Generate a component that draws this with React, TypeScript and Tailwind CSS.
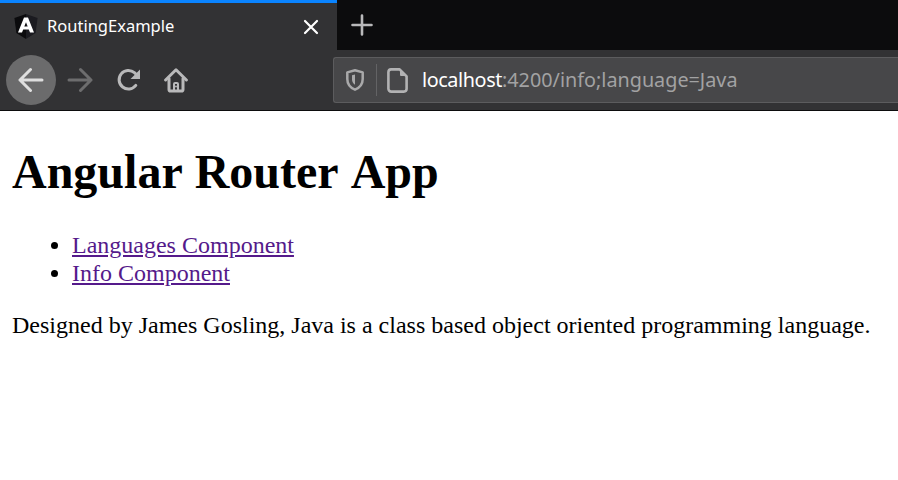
import React from 'react'

const uiFont = "font-['Noto_Sans','Open_Sans',sans-serif]"

function AngularLogo() {
  return (
    <svg width="24" height="25" viewBox="0 0 24 25" className="shrink-0">
      <path d="M12 0 L0.4 4 L2.4 19 L12 25 Z" fill="#0b0b0d" />
      <path d="M12 0 L23.6 4 L21.6 19 L12 25 Z" fill="#1b1b20" />
      <path d="M10 3.5 H14 L20 18.5 H16 L14.8 15.4 H9.2 L8 18.5 H4 Z M10.3 12.6 H13.7 L12 8.2 Z" fill="#ffffff" fillRule="evenodd" />
    </svg>
  )
}

function BackIcon() {
  return (
    <svg width="26" height="26" viewBox="0 0 26 26" fill="none" stroke="#dedede" strokeWidth="3" strokeLinecap="round" strokeLinejoin="round">
      <path d="M2 13 H24 M12.5 2.5 L2 13 L12.5 23.5" />
    </svg>
  )
}

function ForwardIcon() {
  return (
    <svg width="26" height="26" viewBox="0 0 26 26" fill="none" stroke="#6d6d6e" strokeWidth="3" strokeLinecap="round" strokeLinejoin="round">
      <path d="M2 13 H24 M13.5 2.5 L24 13 L13.5 23.5" />
    </svg>
  )
}

function ReloadIcon() {
  return (
    <svg width="24" height="24" viewBox="0 0 24 24" fill="none">
      <path d="M18.8 17.4 A9.3 9.3 0 1 1 17.4 4.6 L20 7" stroke="#b9b9ba" strokeWidth="3" strokeLinecap="round" />
      <path d="M23 1.5 V11 H13.5 Z" fill="#b9b9ba" />
    </svg>
  )
}

function HomeIcon() {
  return (
    <svg width="24" height="25" viewBox="0 0 24 25" fill="none" stroke="#b9b9ba" strokeWidth="3" strokeLinejoin="round" strokeLinecap="round">
      <path d="M1.6 12 L12 1.8 L22.4 12" />
      <path d="M5 10.5 V21.4 A1.6 1.6 0 0 0 6.6 23 H17.4 A1.6 1.6 0 0 0 19 21.4 V10.5" />
      <path d="M10 22 V16 A1 1 0 0 1 11 15 H13 A1 1 0 0 1 14 16 V22" strokeWidth="2" />
      <circle cx="12" cy="18.5" r="1" fill="#b9b9ba" stroke="none" />
    </svg>
  )
}

function ShieldIcon() {
  return (
    <svg width="18" height="22" viewBox="0 0 18 22" fill="none" className="shrink-0">
      <path d="M9 1.3 L16.7 3.4 V10 C16.7 15 13.5 18.8 9 20.7 C4.5 18.8 1.3 15 1.3 10 V3.4 Z" stroke="#a9a9aa" strokeWidth="2.5" strokeLinejoin="round" />
      <path d="M9 5.5 L6 6.3 V10.2 C6 12.6 7.2 14.6 9 15.8 Z" fill="#a9a9aa" />
    </svg>
  )
}

function PageIcon() {
  return (
    <svg width="21" height="25" viewBox="0 0 21 25" fill="none" className="shrink-0">
      <path d="M4 1.4 H12.6 L19.6 8.4 V20.8 A2.8 2.8 0 0 1 16.8 23.6 H4.2 A2.8 2.8 0 0 1 1.4 20.8 V4 A2.8 2.8 0 0 1 4 1.4 Z" stroke="#b2b2b3" strokeWidth="2.6" strokeLinejoin="round" />
      <path d="M13 2 L19 8 H14 A1 1 0 0 1 13 7 Z" fill="#b2b2b3" />
    </svg>
  )
}

export default function App() {
  return (
    <div className="min-h-[480px] bg-white">
      {/* browser chrome */}
      <div className={`h-[111px] bg-[#323234] border-b border-[#0c0c0d] ${uiFont}`}>
        <div className="flex h-[50px] bg-[#0c0c0d]">
          <div className="flex w-[337px] items-center bg-[#323234] border-t-[3px] border-[#0a84ff] pl-[14px] pr-[18px]">
            <AngularLogo />
            <span className="ml-[9px] flex-1 text-[16.5px] text-white">RoutingExample</span>
            <svg width="16" height="16" viewBox="0 0 16 16" stroke="#ffffff" strokeWidth="2.2" strokeLinecap="round">
              <path d="M2 2 L14 14 M14 2 L2 14" />
            </svg>
          </div>
          <div className="flex w-[50px] items-center justify-center">
            <svg width="22" height="22" viewBox="0 0 22 22" stroke="#b9b9ba" strokeWidth="2.6" strokeLinecap="round">
              <path d="M11 1.5 V20.5 M1.5 11 H20.5" />
            </svg>
          </div>
        </div>
        <div className="flex h-[60px] items-center pl-[6px]">
          <div className="flex h-[50px] w-[50px] items-center justify-center rounded-full bg-[#6b6b6c]">
            <BackIcon />
          </div>
          <div className="ml-[11px] flex w-[26px] justify-center">
            <ForwardIcon />
          </div>
          <div className="ml-[24px] flex w-[24px] justify-center">
            <ReloadIcon />
          </div>
          <div className="ml-[23px] flex w-[24px] justify-center">
            <HomeIcon />
          </div>
          <div className="ml-[145px] flex h-[46px] flex-1 items-center rounded-l-[3px] border border-r-0 border-[#5c5c5e] bg-[#474749] pl-[12px]">
            <ShieldIcon />
            <div className="ml-[12px] h-[32px] w-px bg-[#636365]" />
            <div className="ml-[10px] flex">
              <PageIcon />
            </div>
            <span className="ml-[14px] text-[19.8px] whitespace-nowrap text-[#a2a2a3]">
              <span className="tracking-[-0.4px] text-white">localhost</span>:4200/info;language=Java
            </span>
          </div>
        </div>
      </div>

      {/* page */}
      <div className="px-[12px] font-['Liberation_Serif',serif] text-[24px] leading-[28px] text-black">
        <h1 className="pt-[33px] pb-[32px] text-[48px] leading-[55px] font-bold [font-kerning:none]">Angular Router App</h1>
        <ul className="list-disc pl-[60px]">
          <li>
            <a href="#" className="text-[#551a8b] underline">Languages Component</a>
          </li>
          <li>
            <a href="#" className="text-[#551a8b] underline">Info Component</a>
          </li>
        </ul>
        <p className="mt-[24px]">Designed by James Gosling, Java is a class based object oriented programming language.</p>
      </div>
    </div>
  )
}
